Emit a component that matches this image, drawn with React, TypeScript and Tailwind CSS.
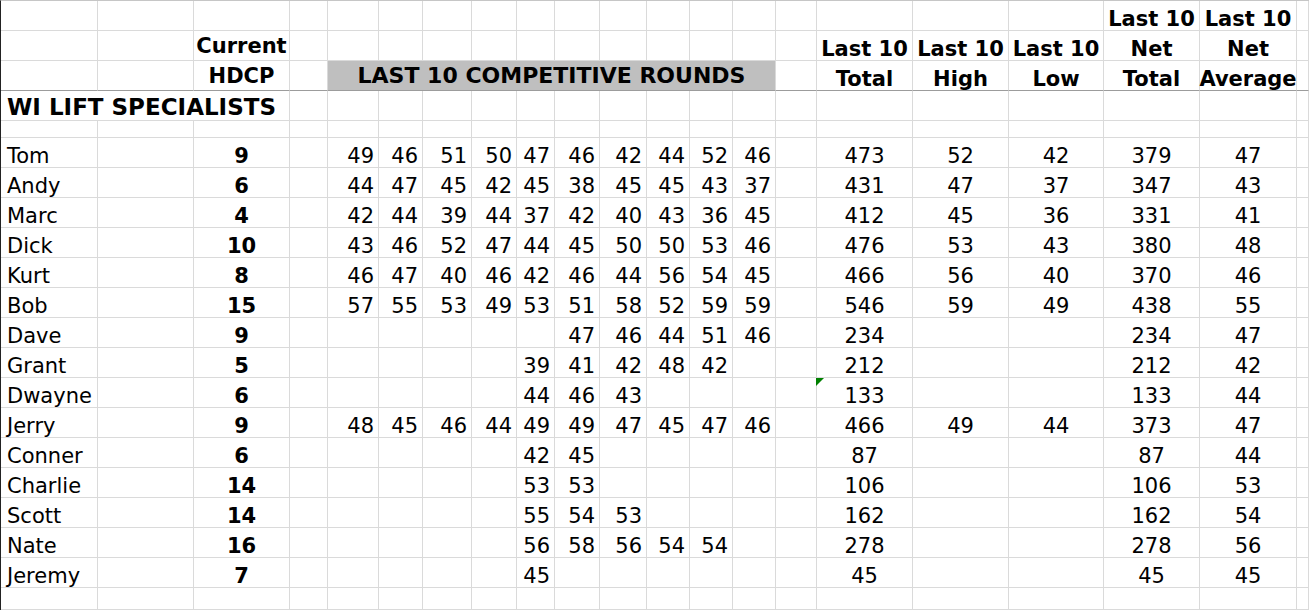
type Player = {
  name: string;
  hdcp: number;
  rounds: (number | null)[];
  total: number;
  high?: number;
  low?: number;
  net: number;
  avg: number;
  flag?: boolean;
};

const _ = null;

const players: Player[] = [
  { name: 'Tom', hdcp: 9, rounds: [49, 46, 51, 50, 47, 46, 42, 44, 52, 46], total: 473, high: 52, low: 42, net: 379, avg: 47 },
  { name: 'Andy', hdcp: 6, rounds: [44, 47, 45, 42, 45, 38, 45, 45, 43, 37], total: 431, high: 47, low: 37, net: 347, avg: 43 },
  { name: 'Marc', hdcp: 4, rounds: [42, 44, 39, 44, 37, 42, 40, 43, 36, 45], total: 412, high: 45, low: 36, net: 331, avg: 41 },
  { name: 'Dick', hdcp: 10, rounds: [43, 46, 52, 47, 44, 45, 50, 50, 53, 46], total: 476, high: 53, low: 43, net: 380, avg: 48 },
  { name: 'Kurt', hdcp: 8, rounds: [46, 47, 40, 46, 42, 46, 44, 56, 54, 45], total: 466, high: 56, low: 40, net: 370, avg: 46 },
  { name: 'Bob', hdcp: 15, rounds: [57, 55, 53, 49, 53, 51, 58, 52, 59, 59], total: 546, high: 59, low: 49, net: 438, avg: 55 },
  { name: 'Dave', hdcp: 9, rounds: [_, _, _, _, _, 47, 46, 44, 51, 46], total: 234, net: 234, avg: 47 },
  { name: 'Grant', hdcp: 5, rounds: [_, _, _, _, 39, 41, 42, 48, 42, _], total: 212, net: 212, avg: 42 },
  { name: 'Dwayne', hdcp: 6, rounds: [_, _, _, _, 44, 46, 43, _, _, _], total: 133, net: 133, avg: 44, flag: true },
  { name: 'Jerry', hdcp: 9, rounds: [48, 45, 46, 44, 49, 49, 47, 45, 47, 46], total: 466, high: 49, low: 44, net: 373, avg: 47 },
  { name: 'Conner', hdcp: 6, rounds: [_, _, _, _, 42, 45, _, _, _, _], total: 87, net: 87, avg: 44 },
  { name: 'Charlie', hdcp: 14, rounds: [_, _, _, _, 53, 53, _, _, _, _], total: 106, net: 106, avg: 53 },
  { name: 'Scott', hdcp: 14, rounds: [_, _, _, _, 55, 54, 53, _, _, _], total: 162, net: 162, avg: 54 },
  { name: 'Nate', hdcp: 16, rounds: [_, _, _, _, 56, 58, 56, 54, 54, _], total: 278, net: 278, avg: 56 },
  { name: 'Jeremy', hdcp: 7, rounds: [_, _, _, _, 45, _, _, _, _, _], total: 45, net: 45, avg: 45 },
];

// column widths, excel style (each includes its right gridline)
const GRID =
  'grid grid-cols-[97px_96px_96px_38px_51px_44px_49px_45px_38px_45px_47px_43px_43px_43px_41px_96px_96px_95px_96px_97px_1fr]';

function Cell({ className = '', children }: { className?: string; children?: React.ReactNode }) {
  return (
    <div className={`flex items-end whitespace-nowrap border-b border-r border-[#dadada] leading-[22px] ${className}`}>
      {children}
    </div>
  );
}

function Blank({ n, h, line = 'border-[#dadada]' }: { n: number; h: string; line?: string }) {
  return (
    <>
      {Array.from({ length: n }).map((_, i) => (
        <Cell key={i} className={`${h} ${line}`} />
      ))}
    </>
  );
}

const head = "justify-center font-['DejaVu_Sans',sans-serif] text-[21px] font-bold";
const num = "font-['DejaVu_Sans',sans-serif] text-[21px]";

export default function App() {
  return (
    <div className="h-[610px] w-full overflow-hidden border-l border-t border-l-[#222] border-t-[#c6c6c6] bg-white text-black">
      <div className={GRID}>
        {/* row 1 */}
        <Blank n={18} h="h-[30px]" />
        <Cell className={`h-[30px] ${head}`}>Last 10</Cell>
        <Cell className={`h-[30px] ${head}`}>Last 10</Cell>
        <Cell className="h-[30px]" />

        {/* row 2 */}
        <Blank n={2} h="h-[30px]" />
        <Cell className={`h-[30px] pb-[3px] ${head}`}>Current</Cell>
        <Blank n={12} h="h-[30px]" />
        <Cell className={`h-[30px] ${head}`}>Last 10</Cell>
        <Cell className={`h-[30px] ${head}`}>Last 10</Cell>
        <Cell className={`h-[30px] ${head}`}>Last 10</Cell>
        <Cell className={`h-[30px] ${head}`}>Net</Cell>
        <Cell className={`h-[30px] ${head}`}>Net</Cell>
        <Cell className="h-[30px]" />

        {/* row 3 */}
        <Blank n={2} h="h-[30px]" line="border-b-[#9c9c9c] border-r-[#dadada]" />
        <Cell className={`h-[30px] border-b-[#9c9c9c] pb-[3px] ${head}`}>HDCP</Cell>
        <Cell className="h-[30px] border-b-[#9c9c9c]" />
        <Cell className="col-span-10 h-[30px] justify-center border-b-[#9c9c9c] bg-[#bfbfbf] pb-[3px] font-['DejaVu_Sans',sans-serif] text-[22px] font-bold">
          LAST 10 COMPETITIVE ROUNDS
        </Cell>
        <Cell className="h-[30px] border-b-[#9c9c9c]" />
        <Cell className={`h-[30px] border-b-[#9c9c9c] ${head}`}>Total</Cell>
        <Cell className={`h-[30px] border-b-[#9c9c9c] ${head}`}>High</Cell>
        <Cell className={`h-[30px] border-b-[#9c9c9c] ${head}`}>Low</Cell>
        <Cell className={`h-[30px] border-b-[#9c9c9c] ${head}`}>Total</Cell>
        <Cell className={`h-[30px] border-b-[#9c9c9c] ${head}`}>Average</Cell>
        <Cell className="h-[30px] border-b-[#9c9c9c]" />

        {/* row 4 */}
        <Cell className="col-span-3 h-[30px] pb-[2px] pl-[6px] font-['DejaVu_Sans',sans-serif] text-[23px] font-bold">
          WI LIFT SPECIALISTS
        </Cell>
        <Blank n={18} h="h-[30px]" />

        {/* row 5 */}
        <Blank n={21} h="h-[17px]" />

        {players.map((p) => (
          <div key={p.name} className="contents">
            <Cell className={`h-[30px] pl-[6px] ${num}`}>{p.name}</Cell>
            <Cell className="h-[30px]" />
            <Cell className={`h-[30px] justify-center font-['DejaVu_Sans',sans-serif] text-[21px] font-bold`}>{p.hdcp}</Cell>
            <Cell className="h-[30px]" />
            {p.rounds.map((r, i) => (
              <Cell key={i} className={`h-[30px] justify-end pr-[4px] ${num}`}>
                {r ?? ''}
              </Cell>
            ))}
            <Cell className="h-[30px]" />
            <Cell className={`relative h-[30px] justify-center ${num}`}>
              {p.flag && (
                <span className="absolute left-[-1px] top-0 h-0 w-0 border-r-[8px] border-t-[8px] border-r-transparent border-t-[#008000]" />
              )}
              {p.total}
            </Cell>
            <Cell className={`h-[30px] justify-center ${num}`}>{p.high ?? ''}</Cell>
            <Cell className={`h-[30px] justify-center ${num}`}>{p.low ?? ''}</Cell>
            <Cell className={`h-[30px] justify-center ${num}`}>{p.net}</Cell>
            <Cell className={`h-[30px] justify-center ${num}`}>{p.avg}</Cell>
            <Cell className="h-[30px]" />
          </div>
        ))}

        {/* trailing empty row */}
        <Blank n={21} h="h-[22px]" />
      </div>
    </div>
  );
}
